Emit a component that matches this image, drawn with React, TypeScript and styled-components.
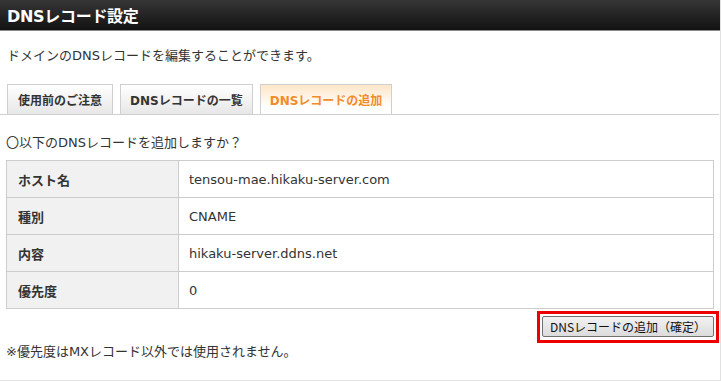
import React from 'react'
import styled, { createGlobalStyle } from 'styled-components'

const GlobalStyle = createGlobalStyle`
  html, body {
    margin: 0;
    padding: 0;
    background: #fff;
  }
  body {
    font-family: 'DejaVu Sans', 'Noto Sans CJK JP', sans-serif;
    color: #333;
  }
`

const Panel = styled.div`
  width: 720px;
  height: 380px;
  border-right: 1px solid #e2e2e2;
  border-bottom: 1px solid #e2e2e2;
  background: #fff;
  overflow: hidden;
`

const Header = styled.div`
  height: 31px;
  display: flex;
  align-items: center;
  padding-left: 7px;
  background: linear-gradient(#363636, #121212);
  border-bottom: 1px solid #8a8a8a;
  box-sizing: border-box;
  color: #fff;
  font-size: 16px;
  font-weight: bold;
  letter-spacing: -0.3px;
`

const Body = styled.div`
  padding: 0 7px 0 6px;
`

const Lead = styled.p`
  margin: 0;
  height: 53px;
  box-sizing: border-box;
  padding: 4px 0 0 1px;
  line-height: 42px;
  font-size: 13px;
`

const TabBar = styled.div`
  display: flex;
  gap: 7px;
  margin-left: -6px;
  padding-left: 7px;
  border-bottom: 1px solid #cfcfcf;
  width: 712px;
`

const Tab = styled.div<{ $active?: boolean; $wide?: boolean }>`
  height: 29px;
  display: flex;
  align-items: center;
  padding: 0 ${({ $wide }) => ($wide ? '10px' : '9px')};
  font-size: 12px;
  font-weight: bold;
  border: 1px solid #cfcfcf;
  border-bottom: none;
  margin-bottom: ${({ $active }) => ($active ? '-1px' : '0')};
  color: ${({ $active }) => ($active ? '#f38b2a' : '#333')};
  background: ${({ $active }) =>
    $active ? 'linear-gradient(#ffe6c8, #fff 75%)' : 'linear-gradient(#fff, #e7e7e7)'};
`

const Question = styled.p`
  margin: 0;
  height: 45px;
  line-height: 56px;
  font-size: 13px;
`

const Table = styled.table`
  width: 708px;
  border-collapse: collapse;
  font-size: 13px;
`

const Label = styled.th`
  width: 160px;
  height: 36px;
  padding: 0 0 0 11px;
  text-align: left;
  font-weight: bold;
  background: #f1f1f1;
  border: 1px solid #cdcdcd;
`

const Value = styled.td`
  height: 36px;
  padding: 0 0 0 10px;
  border: 1px solid #cdcdcd;
`

const Actions = styled.div`
  display: flex;
  justify-content: flex-end;
  margin: 2px -6px 0 0;
`

const Highlight = styled.div`
  border: 3px solid #ee0000;
  padding: 2px 2px 3px 2px;
`

const Button = styled.button`
  width: 172px;
  height: 21px;
  padding: 0;
  font-family: 'Noto Sans CJK JP', sans-serif;
  font-size: 12px;
  color: #111;
  border: 1px solid #707070;
  border-radius: 2px;
  background: linear-gradient(#f2f2f2, #dcdcdc);
`

const Note = styled.p`
  margin: 0;
  line-height: 18px;
  font-size: 13px;
`

const rows = [
  { label: 'ホスト名', value: 'tensou-mae.hikaku-server.com' },
  { label: '種別', value: 'CNAME' },
  { label: '内容', value: 'hikaku-server.ddns.net' },
  { label: '優先度', value: '0' },
]

export default function App() {
  return (
    <>
      <GlobalStyle />
      <Panel>
        <Header>DNSレコード設定</Header>
        <Body>
          <Lead>ドメインのDNSレコードを編集することができます。</Lead>
          <TabBar>
            <Tab $wide>使用前のご注意</Tab>
            <Tab>DNSレコードの一覧</Tab>
            <Tab $active>DNSレコードの追加</Tab>
          </TabBar>
          <Question>〇以下のDNSレコードを追加しますか？</Question>
          <Table>
            <tbody>
              {rows.map((r) => (
                <tr key={r.label}>
                  <Label>{r.label}</Label>
                  <Value>{r.value}</Value>
                </tr>
              ))}
            </tbody>
          </Table>
          <Actions>
            <Highlight>
              <Button>DNSレコードの追加（確定）</Button>
            </Highlight>
          </Actions>
          <Note>※優先度はMXレコード以外では使用されません。</Note>
        </Body>
      </Panel>
    </>
  )
}
